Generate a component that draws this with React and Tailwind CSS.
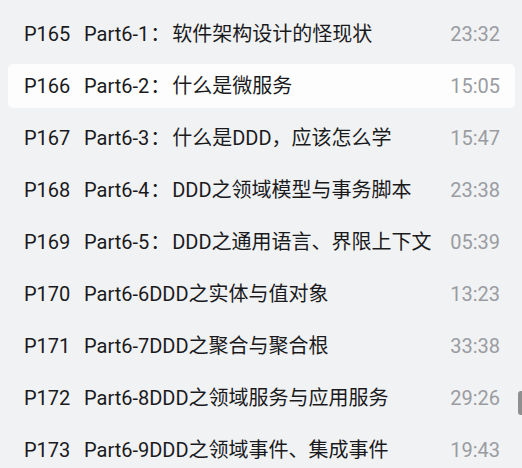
const items = [
  { no: "P165", title: "Part6-1：软件架构设计的怪现状", time: "23:32" },
  { no: "P166", title: "Part6-2：什么是微服务", time: "15:05", active: true },
  { no: "P167", title: "Part6-3：什么是DDD，应该怎么学", time: "15:47" },
  { no: "P168", title: "Part6-4：DDD之领域模型与事务脚本", time: "23:38" },
  { no: "P169", title: "Part6-5：DDD之通用语言、界限上下文", time: "05:39" },
  { no: "P170", title: "Part6-6DDD之实体与值对象", time: "13:23" },
  { no: "P171", title: "Part6-7DDD之聚合与聚合根", time: "33:38" },
  { no: "P172", title: "Part6-8DDD之领域服务与应用服务", time: "29:26" },
  { no: "P173", title: "Part6-9DDD之领域事件、集成事件", time: "19:43" },
];

function Title({ text }) {
  const i = text.indexOf("：");
  if (i < 0) return text;
  return (
    <>
      {text.slice(0, i)}
      <span className="ml-[1px] mr-[2px]">：</span>
      {text.slice(i + 1)}
    </>
  );
}

export default function App() {
  return (
    <div className="relative w-[522px] h-[468px] overflow-hidden bg-[#f1f2f4] font-['Roboto','Noto_Sans_CJK_SC',sans-serif]">
      <div className="flex flex-col pt-[12px] pl-2 pr-[7px]">
        {items.map((it) => (
          <div
            key={it.no}
            className={`flex items-center h-[44px] mb-2 pl-4 pr-[15px] rounded-[5px] ${
              it.active ? "bg-[#fdfdfd]" : ""
            }`}
          >
            <span className="w-[60px] shrink-0 text-[20px] text-[#1a1a1c] leading-none">
              {it.no}
            </span>
            <span className="flex-1 whitespace-nowrap text-[20px] text-[#1a1a1c] leading-none">
              <Title text={it.title} />
            </span>
            <span className="text-[20px] text-[#9a9ca1] leading-none">
              {it.time}
            </span>
          </div>
        ))}
      </div>
      <div className="absolute left-[518px] top-[391px] w-[8px] h-[24px] rounded-[3px] bg-[#8f8f8f]" />
    </div>
  );
}
